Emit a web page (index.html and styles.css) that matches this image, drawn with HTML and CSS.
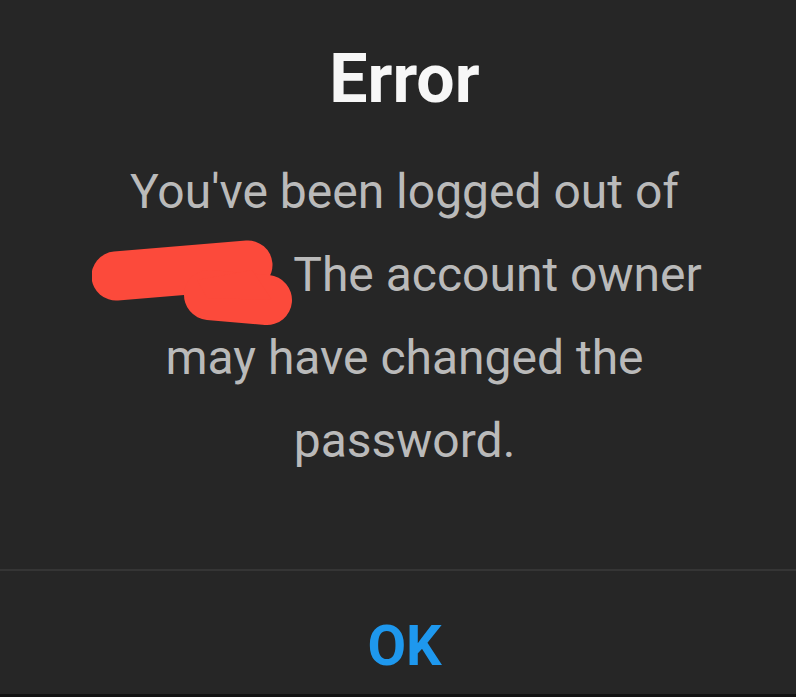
FILE: index.html
```html
<!DOCTYPE html>
<html lang="en">
<head>
<meta charset="utf-8">
<title>Error</title>
<link rel="stylesheet" href="styles.css">
</head>
<body>
<div class="dialog">
  <div class="content">
    <h1 class="title">Error</h1>
    <p class="message">You've been logged out of<br><span class="redact"><svg class="scribble" width="205" height="90" viewBox="0 0 205 90"><path d="M24 36 L156 25" stroke="#fc4a3b" stroke-width="49" stroke-linecap="round" fill="none"/><path d="M117 55 L175 60" stroke="#fc4a3b" stroke-width="50" stroke-linecap="round" fill="none"/><path d="M105 40 L160 30 L180 60 L115 58 Z" fill="#fc4a3b"/></svg></span> The account owner<br>may have changed the<br>password.</p>
  </div>
  <div class="actions">
    <button class="ok">OK</button>
  </div>
  <div class="bottom-edge"></div>
</div>
</body>
</html>
```
FILE: styles.css
```css
html, body {
  margin: 0;
  padding: 0;
  background: #262626;
}
.dialog {
  width: 796px;
  height: 697px;
  display: flex;
  flex-direction: column;
  background: #262626;
  font-family: Roboto, "Liberation Sans", sans-serif;
}
.content {
  flex: 1;
  display: flex;
  flex-direction: column;
  align-items: center;
  padding: 39px 0 0 13px;
}
.title {
  margin: 0;
  font-size: 68px;
  line-height: 80px;
  font-weight: 700;
  color: #f7f7f7;
}
.message {
  margin: 31px 0 0;
  font-size: 48px;
  line-height: 83px;
  color: #bababa;
  text-align: center;
}
.redact {
  display: inline-block;
  position: relative;
  width: 175px;
  height: 1px;
}
.scribble {
  position: absolute;
  left: -15px;
  top: -50px;
}
.actions {
  border-top: 2px solid #353535;
  height: 123px;
  display: flex;
  justify-content: center;
  align-items: flex-start;
  padding-left: 13px;
}
.ok {
  margin-top: 45px;
  background: none;
  border: none;
  padding: 0;
  font-family: Roboto, "Liberation Sans", sans-serif;
  font-size: 56px;
  line-height: 60px;
  font-weight: 700;
  color: #1e98ee;
}
.bottom-edge {
  height: 3px;
  background: #121212;
}
```
